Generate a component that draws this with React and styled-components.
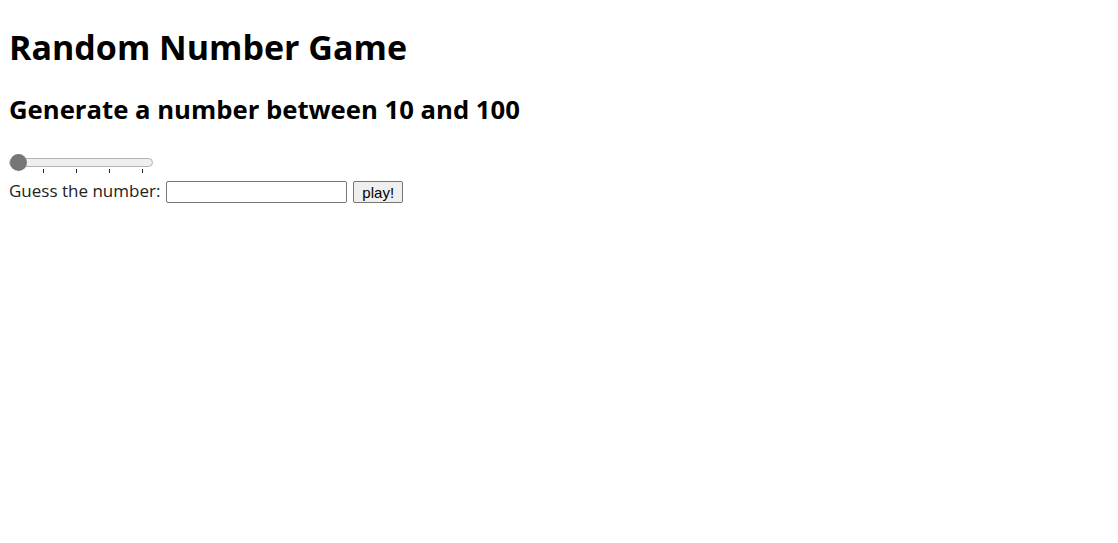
import React, { useState } from 'react'
import styled, { createGlobalStyle } from 'styled-components'

const Global = createGlobalStyle`
    body {
        margin: 8px;
        background: #fff;
        font-family: "Open Sans", "Noto Sans CJK KR", sans-serif;
        color: #000;
    }
`

const Title = styled.h1`
    font-size: 34px;
    font-weight: 700;
    margin: 17px 0 22px;
    padding-left: 1px;
    line-height: 44px;
`

const SubTitle = styled.h2`
    font-size: 25.7px;
    font-weight: 700;
    margin: 24px 0 27px;
    padding-left: 1px;
    line-height: 34px;
`

const SliderBox = styled.div`
    width: 144px;
    margin-left: 1px;
    display: flex;
    flex-direction: column;
`

const Range = styled.input`
    -webkit-appearance: none;
    appearance: none;
    width: 144px;
    height: 17px;
    margin: 0;
    background: transparent;

    &::-webkit-slider-runnable-track {
        height: 9px;
        background: #efefef;
        border: 1px solid #b2b2b2;
        border-radius: 5px;
        box-sizing: border-box;
    }
    &::-webkit-slider-thumb {
        -webkit-appearance: none;
        width: 17px;
        height: 17px;
        border-radius: 50%;
        background: #767676;
        margin-top: -5px;
        border: none;
    }
`

const Ticks = styled.div`
    position: relative;
    height: 4px;
    margin-top: -2px;
`

const Tick = styled.span`
    position: absolute;
    top: 0;
    width: 1px;
    height: 4px;
    background: #222;
`

const Row = styled.div`
    display: flex;
    align-items: flex-start;
    margin-top: 8px;
`

const Label = styled.span`
    font-size: 17px;
    line-height: 20px;
    color: #222;
    padding-left: 1px;
`

const Field = styled.input`
    width: 181px;
    height: 22px;
    box-sizing: border-box;
    margin: 0 6px 0 6px;
    border: 1px solid #767676;
    border-radius: 2px;
    padding: 1px 2px;
    font-size: 13px;
`

const PlayButton = styled.button`
    height: 22px;
    padding: 0 8px;
    font-family: "Liberation Sans", Arial, sans-serif;
    font-size: 15px;
    background: #efefef;
    border: 1px solid #767676;
    border-radius: 2px;
    color: #000;
`

const tickMarks = [40, 60, 80, 100]

export default function App() {
    const [value, setValue] = useState(25)
    const [guess, setGuess] = useState('')

    return (
        <div>
            <Global />
            <Title>Random Number Game</Title>
            <SubTitle>Generate a number between 10 and 100</SubTitle>
            <SliderBox>
                <Range type="range" min={25} max={100} value={value} onChange={e => setValue(e.target.value)} />
                <Ticks>
                    {tickMarks.map(t => (
                        <Tick key={t} style={{ left: 9 + ((t - 25) / 75) * 124 }} />
                    ))}
                </Ticks>
            </SliderBox>
            <Row>
                <Label>Guess the number:</Label>
                <Field type="text" value={guess} onChange={e => setGuess(e.target.value)} />
                <PlayButton>play!</PlayButton>
            </Row>
        </div>
    )
}
